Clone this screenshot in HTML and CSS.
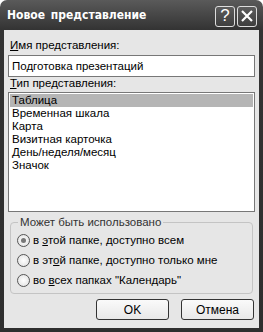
FILE: index.html
```html
<!DOCTYPE html>
<html lang="ru">
<head>
  <meta charset="UTF-8">
  <title>Новое представление</title>
  <link rel="stylesheet" href="styles.css">
</head>
<body>
  <div class="window">
    <div class="titlebar">
      <span class="title">Новое представление</span>
      <div class="caption-buttons">
        <span class="cap-btn">?</span>
        <span class="cap-btn">
          <svg width="14" height="14" viewBox="0 0 14 14"><path d="M2 2 L12 12 M12 2 L2 12" stroke="#fff" stroke-width="2.2"/></svg>
        </span>
      </div>
    </div>

    <div class="content">
      <label class="field-label"><u>И</u>мя представления:</label>
      <div class="textbox">Подготовка презентаций</div>

      <label class="field-label"><u>Т</u>ип представления:</label>
      <ul class="listbox">
        <li class="selected">Таблица</li>
        <li>Временная шкала</li>
        <li>Карта</li>
        <li>Визитная карточка</li>
        <li>День/неделя/месяц</li>
        <li>Значок</li>
      </ul>

      <fieldset class="group">
        <legend>Может быть использовано</legend>
        <div class="radio"><span class="dot checked"></span><span>в <u>э</u>той папке, доступно всем</span></div>
        <div class="radio"><span class="dot"></span><span>в эт<u>о</u>й папке, доступно только мне</span></div>
        <div class="radio"><span class="dot"></span><span>во <u>в</u>сех папках "Календарь"</span></div>
      </fieldset>

      <div class="buttons">
        <button class="btn">OK</button>
        <button class="btn">Отмена</button>
      </div>
    </div>
  </div>
</body>
</html>
```

FILE: styles.css
```css
body {
  margin: 0;
  padding: 0;
  background: #fff;
}

.window {
  width: 263px;
  height: 332px;
  box-sizing: border-box;
  display: flex;
  flex-direction: column;
  background: linear-gradient(#5a5a5a, #333 30px, #2e2e2e);
  border-radius: 7px 7px 0 0;
  padding: 0 4px 4px 4px;
  font-family: "Liberation Sans", sans-serif;
  font-size: 11.5px;
  color: #000;
}

.titlebar {
  height: 30px;
  display: flex;
  align-items: center;
  justify-content: space-between;
  padding: 0 2px 0 3px;
}

.title {
  color: #fff;
  font-family: "DejaVu Sans", sans-serif;
  font-stretch: condensed;
  font-weight: bold;
  font-size: 12px;
  word-spacing: 2px;
}

.caption-buttons {
  display: flex;
  gap: 2px;
  margin-top: 2px;
}

.cap-btn {
  width: 20px;
  height: 21px;
  box-sizing: border-box;
  border: 1px solid #ddd;
  border-radius: 3px;
  background: linear-gradient(#5d5d5d, #3e3e3e);
  color: #fff;
  font-size: 17px;
  display: flex;
  align-items: center;
  justify-content: center;
}

.content {
  flex: 1;
  background: #e6e6e6;
  padding: 9px 4px 0 4px;
  display: flex;
  flex-direction: column;
}

.field-label {
  display: block;
  padding-left: 2px;
  line-height: 13px;
}

.textbox {
  margin-top: 3px;
  height: 22px;
  box-sizing: border-box;
  border: 1px solid #777;
  background: #fff;
  padding-left: 3px;
  line-height: 20px;
}

.listbox {
  list-style: none;
  margin: 2px 0 0 0;
  padding: 1px;
  height: 120px;
  box-sizing: border-box;
  border: 1px solid #777;
  background: #fff;
}

.listbox li {
  height: 13px;
  line-height: 13px;
  padding-left: 2px;
}

.listbox li.selected {
  background: #b5b5b5;
}

.group {
  margin: 4px 2px 0 2px;
  padding: 2px 6px 6px 6px;
  border: 1px solid #c4c4c4;
  border-radius: 4px;
  height: 78px;
  box-sizing: border-box;
}

.group legend {
  padding: 0 2px;
  margin-left: 1px;
  color: #333;
}

.radio {
  display: flex;
  align-items: center;
  height: 20px;
}

.dot {
  width: 11px;
  height: 11px;
  border: 1px solid #555;
  border-radius: 50%;
  background: radial-gradient(#fff, #ddd);
  margin-right: 3px;
  position: relative;
  flex: none;
}

.dot.checked::after {
  content: "";
  position: absolute;
  left: 3px;
  top: 3px;
  width: 5px;
  height: 5px;
  border-radius: 50%;
  background: #777;
}

.buttons {
  display: flex;
  justify-content: flex-end;
  gap: 12px;
  margin-top: 5px;
  padding-right: 1px;
}

.btn {
  width: 73px;
  height: 21px;
  border: 1px solid #333;
  border-radius: 3px;
  background: linear-gradient(#fafafa, #e8e8e8);
  font-family: "Liberation Sans", sans-serif;
  font-size: 12px;
  font-weight: normal;
  color: #000;
  padding: 0;
}
```
